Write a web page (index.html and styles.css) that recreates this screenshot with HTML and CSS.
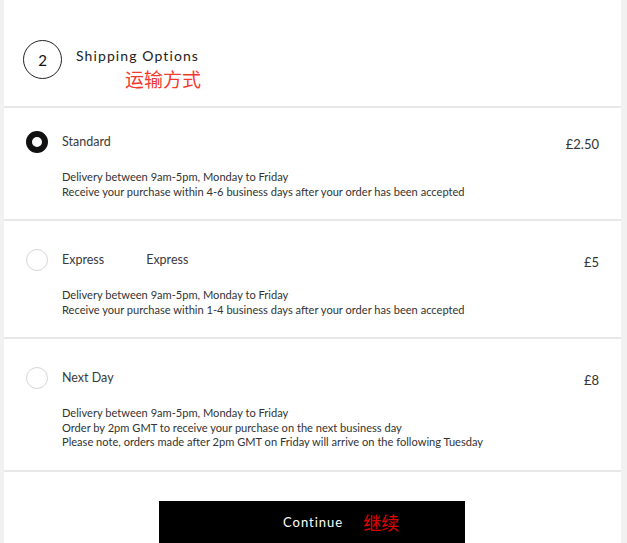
FILE: index.html
```html
<!DOCTYPE html>
<html>
<head>
<meta charset="utf-8">
<link rel="stylesheet" href="styles.css">
</head>
<body>
<div class="panel">
  <div class="header">
    <div class="step">2</div>
    <div class="head-text">
      <div class="title">Shipping Options</div>
      <div class="cn-title">运输方式</div>
    </div>
  </div>
  <div class="option first">
    <div class="radio checked"></div>
    <div class="info">
      <div class="name">Standard</div>
      <div class="desc">
        <div>Delivery between 9am-5pm, Monday to Friday</div>
        <div>Receive your purchase within 4-6 business days after your order has been accepted</div>
      </div>
    </div>
    <div class="price">£2.50</div>
  </div>
  <div class="option">
    <div class="radio"></div>
    <div class="info">
      <div class="name">Express<span class="dup">Express</span></div>
      <div class="desc">
        <div>Delivery between 9am-5pm, Monday to Friday</div>
        <div>Receive your purchase within 1-4 business days after your order has been accepted</div>
      </div>
    </div>
    <div class="price">£5</div>
  </div>
  <div class="option">
    <div class="radio"></div>
    <div class="info">
      <div class="name">Next Day</div>
      <div class="desc">
        <div>Delivery between 9am-5pm, Monday to Friday</div>
        <div>Order by 2pm GMT to receive your purchase on the next business day</div>
        <div>Please note, orders made after 2pm GMT on Friday will arrive on the following Tuesday</div>
      </div>
    </div>
    <div class="price">£8</div>
  </div>
  <div class="actions">
    <button class="continue"><span class="btn-label">Continue</span><span class="btn-cn">继续</span></button>
  </div>
</div>
</body>
</html>
```

FILE: styles.css
```css
html, body {
  margin: 0;
  padding: 0;
}
body {
  background: #f1f1f1;
  font-family: "Lato", "Noto Sans CJK SC", sans-serif;
  color: #333;
  height: 543px;
  overflow: hidden;
}
.panel {
  margin-left: 4px;
  width: 617px;
  height: 543px;
  background: #fff;
  overflow: hidden;
}
.header {
  display: flex;
  align-items: flex-start;
  padding: 40px 0 0 19px;
  height: 66px;
  border-bottom: 2px solid #e8e8e8;
}
.step {
  width: 37px;
  height: 37px;
  border: 1.3px solid #222;
  border-radius: 50%;
  display: flex;
  align-items: center;
  justify-content: center;
  font-size: 15px;
  color: #111;
  flex: none;
}
.head-text {
  margin-left: 14px;
  padding-top: 8px;
}
.title {
  font-size: 14px;
  letter-spacing: 1.1px;
  color: #222;
  line-height: 16px;
}
.cn-title {
  font-family: "Noto Sans CJK SC", sans-serif;
  color: #f4392f;
  font-size: 19px;
  line-height: 22px;
  margin-left: 49px;
  margin-top: 4px;
}
.option {
  display: flex;
  align-items: flex-start;
  padding: 28px 22px 20px 22px;
  border-bottom: 2px solid #e8e8e8;
}
.option.first {
  padding-top: 23px;
}
.radio {
  width: 20px;
  height: 20px;
  border: 1px solid #d6d6d6;
  border-radius: 50%;
  flex: none;
}
.radio.checked {
  width: 10px;
  height: 10px;
  border: 6px solid #111;
}
.info {
  flex: 1;
  margin-left: 14px;
}
.name {
  font-size: 12.5px;
  line-height: 22px;
  color: #3a3a3a;
}
.dup {
  margin-left: 42px;
}
.desc {
  margin-top: 17px;
  font-size: 11.1px;
  line-height: 14.5px;
  color: #333;
}
.price {
  font-size: 13px;
  line-height: 22px;
  padding-top: 2px;
  color: #333;
}
.actions {
  padding: 29px 0 0 155px;
}
.continue {
  width: 306px;
  height: 50px;
  background: #000;
  border: none;
  display: flex;
  align-items: center;
  justify-content: flex-start;
  padding: 0 0 8px 124px;
  margin: 0;
}
.btn-label {
  font-family: "Lato", sans-serif;
  color: #fff;
  font-size: 13px;
  letter-spacing: 1px;
}
.btn-cn {
  font-family: "Noto Sans CJK SC", sans-serif;
  color: #e00000;
  font-size: 18px;
  margin-left: 20px;
}
```
